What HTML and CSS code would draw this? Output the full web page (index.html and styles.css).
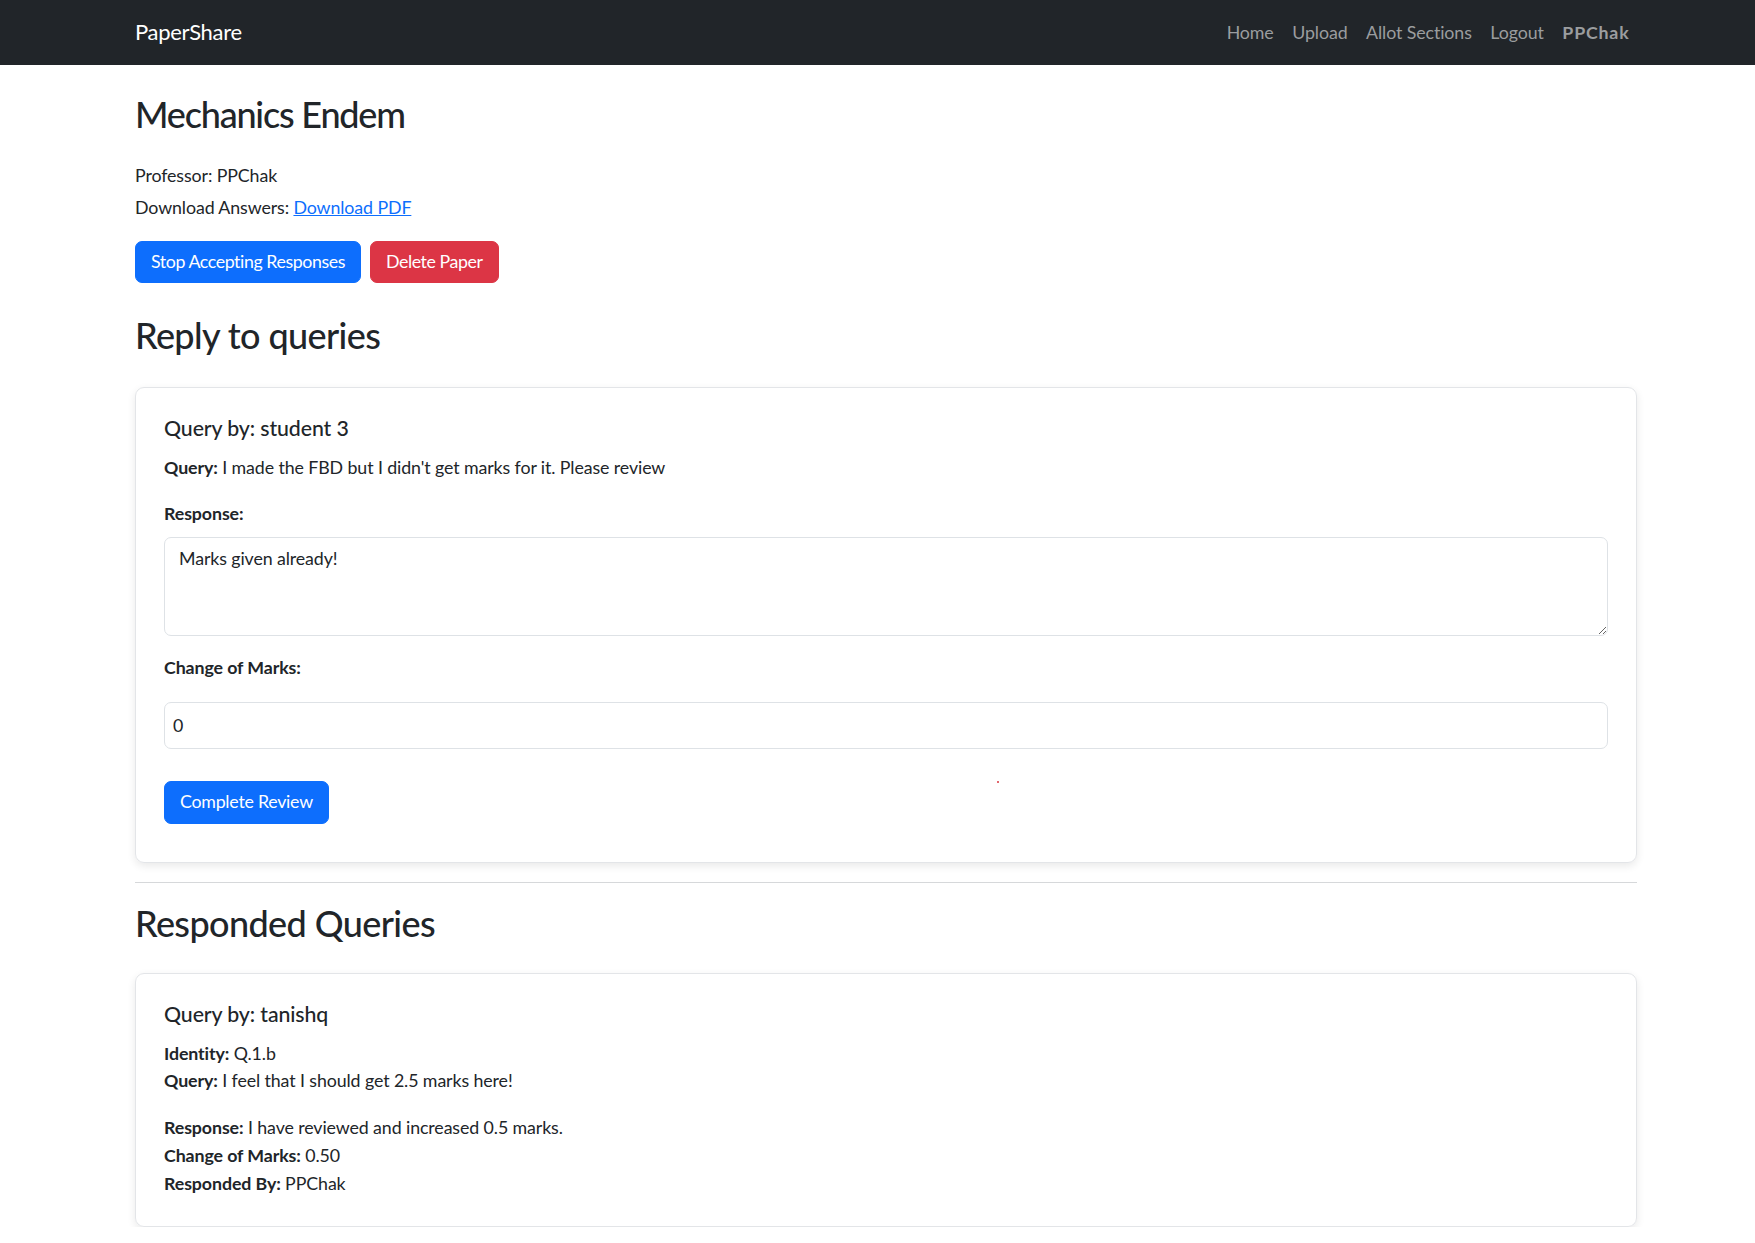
FILE: index.html
```html
<!DOCTYPE html>
<html lang="en">
<head>
<meta charset="utf-8">
<title>PaperShare</title>
<link rel="stylesheet" href="styles.css">
</head>
<body>
<nav class="navbar">
  <div class="container nav-inner">
    <a class="brand" href="#">PaperShare</a>
    <ul class="nav-links">
      <li><a class="nav-link" href="#">Home</a></li>
      <li><a class="nav-link" href="#">Upload</a></li>
      <li><a class="nav-link" href="#">Allot Sections</a></li>
      <li><a class="nav-link" href="#">Logout</a></li>
      <li><span class="nav-link nav-user">PPChak</span></li>
    </ul>
  </div>
</nav>

<main class="container main">
  <h1 class="page-title">Mechanics Endem</h1>
  <p class="meta">Professor: PPChak</p>
  <p class="meta meta-last">Download Answers: <a class="link" href="#">Download PDF</a></p>
  <div class="actions">
    <button class="btn btn-primary">Stop Accepting Responses</button>
    <button class="btn btn-danger">Delete Paper</button>
  </div>

  <h2 class="section-title">Reply to queries</h2>
  <div class="card">
    <h5 class="card-title">Query by: student 3</h5>
    <p class="card-text"><strong>Query:</strong> I made the FBD but I didn't get marks for it. Please review</p>
    <form class="review-form">
      <label class="form-label">Response:</label>
      <textarea class="form-control textarea" rows="3">Marks given already!</textarea>
      <label class="form-label label-marks">Change of Marks:</label>
      <input class="form-control input" type="text" value="0">
      <button type="button" class="btn btn-primary btn-review">Complete Review</button>
    </form>
  </div>

  <hr class="divider">

  <h2 class="section-title section-title-2">Responded Queries</h2>
  <div class="card card-2">
    <h5 class="card-title">Query by: tanishq</h5>
    <p class="card-text"><strong>Identity:</strong> Q.1.b<br><strong>Query:</strong> I feel that I should get 2.5 marks here!</p>
    <p class="card-text card-text-last"><strong>Response:</strong> I have reviewed and increased 0.5 marks.<br><strong>Change of Marks:</strong> 0.50<br><strong>Responded By:</strong> PPChak</p>
  </div>
</main>
<span class="red-dot"></span>
</body>
</html>
```
FILE: styles.css
```css
* { box-sizing: border-box; }
html, body { margin: 0; padding: 0; }
body {
  font-family: Lato, "Open Sans", sans-serif;
  font-size: 17.8px;
  line-height: 27.75px;
  letter-spacing: -0.1px;
  color: #212529;
  background: #fff;
  position: relative;
}
.container {
  width: 1502px;
  margin-left: 135px;
}
.navbar {
  background: #212529;
  height: 65px;
}
.nav-inner {
  height: 65px;
  display: flex;
  align-items: center;
  justify-content: space-between;
}
.brand {
  color: #fff;
  text-decoration: none;
  font-size: 22px;
  line-height: 30px;
  letter-spacing: -0.3px;
  margin-top: -2px;
}
.nav-links {
  list-style: none;
  display: flex;
  margin: 0;
  padding: 0;
}
.nav-link {
  display: block;
  padding: 8px 9.3px;
  color: #9b9d9f;
  text-decoration: none;
}
.nav-user { font-weight: 700; letter-spacing: 0.8px; padding-right: 7.5px; }

.main { padding-top: 27px; }
.page-title {
  font-size: 36px;
  line-height: 45px;
  font-weight: 500;
  letter-spacing: -1.2px;
  margin: 0 0 25px;
}
.meta { margin: 0 0 4.5px; }
.meta-last { margin-bottom: 18.5px; }
.link { color: #0d6efd; text-decoration: underline; }
.actions { display: flex; gap: 9px; }
.btn {
  font-family: inherit;
  font-size: 17.8px;
  line-height: 27.75px;
  letter-spacing: -0.42px;
  padding: 6.5px 15px;
  border: 1px solid transparent;
  border-radius: 7px;
  color: #fff;
  cursor: pointer;
}
.btn-primary { background: #0d6efd; border-color: #0d6efd; }
.btn-danger { background: #dc3545; border-color: #dc3545; }

.section-title {
  font-size: 36px;
  line-height: 45px;
  font-weight: 500;
  letter-spacing: -0.6px;
  margin: 30px 0 29px;
}
.card {
  border: 1px solid #e3e5e8;
  border-radius: 9px;
  padding: 28px 28px 38px;
  box-shadow: 0 3px 8px rgba(0, 0, 0, 0.09);
}
.card-title {
  font-size: 21.3px;
  line-height: 26.4px;
  font-weight: 500;
  margin: -1px 0 12px;
}
.card-text { margin: 0 0 19px; }
.card-text-last { margin-bottom: 0; }
.review-form { display: flex; flex-direction: column; align-items: flex-start; }
.form-label { font-weight: 700; display: block; margin-bottom: 9px; }
.form-control {
  width: 100%;
  font-family: inherit;
  font-size: 17.8px;
  line-height: 27.75px;
  letter-spacing: -0.1px;
  color: #212529;
  border: 1px solid #dee2e6;
  border-radius: 7px;
  padding: 7px 14px;
  background: #fff;
}
.textarea { height: 99px; resize: vertical; display: block; }
.label-marks { margin-top: 18px; margin-bottom: 20px; }
.input { height: 47px; padding: 9px 8px; }
.btn-review { margin-top: 32px; letter-spacing: -0.25px; }

.divider {
  border: 0;
  border-top: 1px solid #d6d8da;
  margin: 19px 0 0;
}
.section-title-2 { margin: 18px 0 27.5px; }
.card-2 { padding-bottom: 29px; }

.red-dot {
  position: absolute;
  left: 997px;
  top: 781px;
  width: 2px;
  height: 2px;
  background: #d9363e;
  border-radius: 1px;
}
```
